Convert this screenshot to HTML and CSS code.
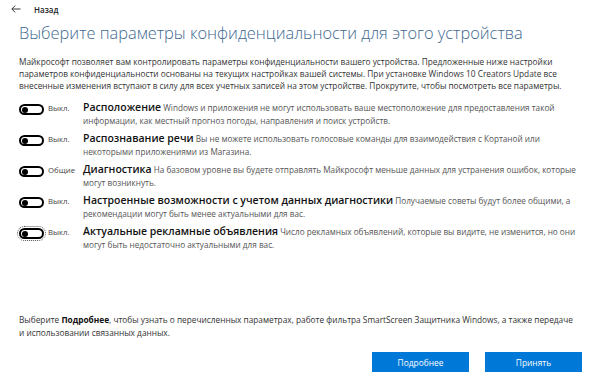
FILE: index.html
```html
<!DOCTYPE html>
<html lang="ru">
<head>
    <meta charset="UTF-8">
    <meta name="viewport" content="width=device-width, initial-scale=1.0">
    <title>Параметры конфиденциальности</title>
    <link rel="stylesheet" href="styles.css">
</head>
<body>
    <div class="page">
        <div class="back">
            <svg class="back-icon" width="10" height="8" viewBox="0 0 10 8">
                <path d="M9.5 4H1M4.2 0.6L0.8 4l3.4 3.4" fill="none" stroke="#222" stroke-width="0.9"/>
            </svg>
            <span>Назад</span>
        </div>

        <h1 class="title">Выберите параметры конфиденциальности для этого устройства</h1>

        <p class="intro">Майкрософт позволяет вам контролировать параметры конфиденциальности вашего устройства. Предложенные ниже настройки параметров конфиденциальности основаны на текущих настройках вашей системы. При установке Windows 10 Creators Update все внесенные изменения вступают в силу для всех учетных записей на этом устройстве. Прокрутите, чтобы посмотреть все параметры.</p>

        <ul class="settings">
            <li class="setting">
                <span class="toggle"></span>
                <span class="state">Выкл.</span>
                <p class="setting-text"><b>Расположение</b> Windows и приложения не могут использовать ваше местоположение для предоставления такой информации, как местный прогноз погоды, направления и поиск устройств.</p>
            </li>
            <li class="setting">
                <span class="toggle"></span>
                <span class="state">Выкл.</span>
                <p class="setting-text"><b>Распознавание речи</b> Вы не можете использовать голосовые команды для взаимодействия с Кортаной или некоторыми приложениями из Магазина.</p>
            </li>
            <li class="setting">
                <span class="toggle"></span>
                <span class="state">Общие</span>
                <p class="setting-text"><b>Диагностика</b> На базовом уровне вы будете отправлять Майкрософт меньше данных для устранения ошибок, которые могут возникнуть.</p>
            </li>
            <li class="setting">
                <span class="toggle"></span>
                <span class="state">Выкл.</span>
                <p class="setting-text"><b>Настроенные возможности с учетом данных диагностики</b> Получаемые советы будут более общими, а рекомендации могут быть менее актуальными для вас.</p>
            </li>
            <li class="setting">
                <span class="toggle focused"></span>
                <span class="state">Выкл.</span>
                <p class="setting-text"><b>Актуальные рекламные объявления</b> Число рекламных объявлений, которые вы видите, не изменится, но они могут быть недостаточно актуальными для вас.</p>
            </li>
        </ul>

        <div class="footer">
            <p class="footer-text">Выберите <b>Подробнее</b>, чтобы узнать о перечисленных параметрах, работе фильтра SmartScreen Защитника Windows, а также передаче и использовании связанных данных.</p>
            <div class="actions">
                <button class="btn">Подробнее</button>
                <button class="btn">Принять</button>
            </div>
        </div>
    </div>
</body>
</html>
```

FILE: styles.css
```css
body {
    margin: 0;
    background-color: #fff;
    font-family: "Open Sans", "Noto Sans", sans-serif;
    color: #333;
}
.page {
    display: flex;
    flex-direction: column;
    min-height: 392px;
    box-sizing: border-box;
    padding: 3px 18px 20px 19px;
}
.back {
    display: flex;
    align-items: center;
    gap: 13px;
    margin-left: -8px;
    height: 12px;
    font-size: 8px;
    font-weight: 600;
    color: #222;
}
.title {
    margin: 7px 0 0;
    font-size: 16.4px;
    font-weight: 300;
    line-height: 22px;
    color: #40688f;
}
.intro {
    margin: 12px 0 0;
    font-size: 8.3px;
    line-height: 12px;
    color: #333;
}
.settings {
    list-style: none;
    margin: 9px 0 0;
    padding: 0;
}
.setting {
    display: flex;
    align-items: flex-start;
    margin-bottom: 5px;
}
.toggle {
    flex: none;
    position: relative;
    width: 21px;
    height: 7px;
    margin-top: 3px;
    border: 2px solid #000;
    border-radius: 6px;
}
.toggle::after {
    content: "";
    position: absolute;
    left: 1px;
    top: 0.5px;
    width: 6px;
    height: 6px;
    border-radius: 50%;
    background-color: #000;
}
.toggle.focused {
    outline: 1px dotted #555;
    outline-offset: 1px;
}
.state {
    flex: none;
    width: 35px;
    padding-left: 4px;
    font-size: 7.8px;
    line-height: 14px;
    color: #444;
}
.setting-text {
    margin: 0;
    font-size: 8.2px;
    line-height: 13px;
    color: #555;
}
.setting-text b {
    font-size: 10.5px;
    line-height: 13px;
    font-weight: 600;
    color: #111;
}
.footer {
    margin-top: auto;
}
.footer-text {
    max-width: 560px;
    margin: 0;
    font-size: 8.3px;
    line-height: 13px;
    color: #333;
}
.footer-text b {
    color: #111;
}
.actions {
    display: flex;
    justify-content: flex-end;
    gap: 16px;
    margin-top: 13px;
}
.btn {
    width: 97px;
    height: 20px;
    border: none;
    background-color: #0078d7;
    color: #fff;
    font-family: "Open Sans", "Noto Sans", sans-serif;
    font-size: 8.4px;
    cursor: pointer;
}
```
